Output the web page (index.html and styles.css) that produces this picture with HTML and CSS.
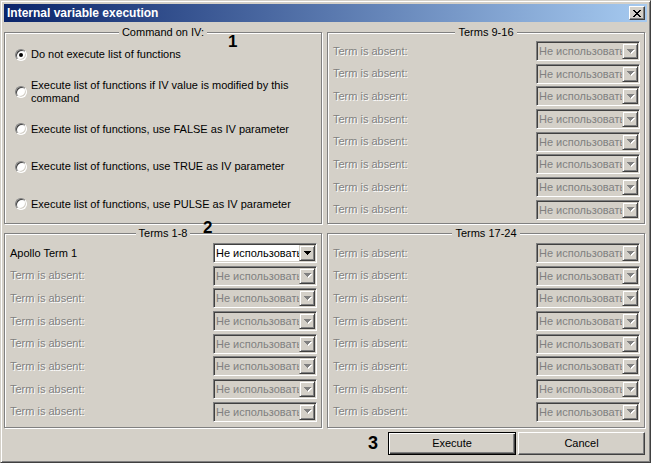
FILE: index.html
```html
<!DOCTYPE html>
<html lang="en">
<head>
<meta charset="utf-8">
<title>Internal variable execution</title>
<link rel="stylesheet" href="styles.css">
</head>
<body>
<div class="window">
  <div class="titlebar">
    <span class="title">Internal variable execution</span>
    <button class="close" type="button" aria-label="Close">
      <svg width="8" height="7" viewBox="0 0 8 7" shape-rendering="crispEdges"><path d="M0 0h2v1H0zM6 0h2v1H6zM1 1h2v1H1zM5 1h2v1H5zM2 2h4v1H2zM3 3h2v1H3zM2 4h4v1H2zM1 5h2v1H1zM5 5h2v1H5zM0 6h2v1H0zM6 6h2v1H6z" fill="#000"/></svg>
    </button>
  </div>

  <div class="panels">
    <section class="group">
      <div class="group-title">Command on IV:</div>
      <div class="options">
        <label class="radio-row"><span class="radio checked"></span><span class="radio-text">Do not execute list of functions</span></label>
        <label class="radio-row"><span class="radio"></span><span class="radio-text">Execute list of functions if IV value is modified by this command</span></label>
        <label class="radio-row"><span class="radio"></span><span class="radio-text">Execute list of functions, use FALSE as IV parameter</span></label>
        <label class="radio-row"><span class="radio"></span><span class="radio-text">Execute list of functions, use TRUE as IV parameter</span></label>
        <label class="radio-row"><span class="radio"></span><span class="radio-text">Execute list of functions, use PULSE as IV parameter</span></label>
      </div>
    </section>

    <section class="group">
      <div class="group-title">Terms 9-16</div>
      <div class="rows rows-top">
        <div class="row"><span class="label disabled">Term is absent:</span><div class="combo disabled"><span class="combo-text">Не использовать</span><span class="combo-btn"><svg width="8" height="5" viewBox="0 0 8 5" shape-rendering="crispEdges"><path d="M1 1h7v1H1zM2 2h5v1H2zM3 3h3v1H3zM4 4h1v1H4z" fill="#fff"/><path d="M0 0h7v1H0zM1 1h5v1H1zM2 2h3v1H2zM3 3h1v1H3z" fill="#808080"/></svg></span></div></div>
        <div class="row"><span class="label disabled">Term is absent:</span><div class="combo disabled"><span class="combo-text">Не использовать</span><span class="combo-btn"><svg width="8" height="5" viewBox="0 0 8 5" shape-rendering="crispEdges"><path d="M1 1h7v1H1zM2 2h5v1H2zM3 3h3v1H3zM4 4h1v1H4z" fill="#fff"/><path d="M0 0h7v1H0zM1 1h5v1H1zM2 2h3v1H2zM3 3h1v1H3z" fill="#808080"/></svg></span></div></div>
        <div class="row"><span class="label disabled">Term is absent:</span><div class="combo disabled"><span class="combo-text">Не использовать</span><span class="combo-btn"><svg width="8" height="5" viewBox="0 0 8 5" shape-rendering="crispEdges"><path d="M1 1h7v1H1zM2 2h5v1H2zM3 3h3v1H3zM4 4h1v1H4z" fill="#fff"/><path d="M0 0h7v1H0zM1 1h5v1H1zM2 2h3v1H2zM3 3h1v1H3z" fill="#808080"/></svg></span></div></div>
        <div class="row"><span class="label disabled">Term is absent:</span><div class="combo disabled"><span class="combo-text">Не использовать</span><span class="combo-btn"><svg width="8" height="5" viewBox="0 0 8 5" shape-rendering="crispEdges"><path d="M1 1h7v1H1zM2 2h5v1H2zM3 3h3v1H3zM4 4h1v1H4z" fill="#fff"/><path d="M0 0h7v1H0zM1 1h5v1H1zM2 2h3v1H2zM3 3h1v1H3z" fill="#808080"/></svg></span></div></div>
        <div class="row"><span class="label disabled">Term is absent:</span><div class="combo disabled"><span class="combo-text">Не использовать</span><span class="combo-btn"><svg width="8" height="5" viewBox="0 0 8 5" shape-rendering="crispEdges"><path d="M1 1h7v1H1zM2 2h5v1H2zM3 3h3v1H3zM4 4h1v1H4z" fill="#fff"/><path d="M0 0h7v1H0zM1 1h5v1H1zM2 2h3v1H2zM3 3h1v1H3z" fill="#808080"/></svg></span></div></div>
        <div class="row"><span class="label disabled">Term is absent:</span><div class="combo disabled"><span class="combo-text">Не использовать</span><span class="combo-btn"><svg width="8" height="5" viewBox="0 0 8 5" shape-rendering="crispEdges"><path d="M1 1h7v1H1zM2 2h5v1H2zM3 3h3v1H3zM4 4h1v1H4z" fill="#fff"/><path d="M0 0h7v1H0zM1 1h5v1H1zM2 2h3v1H2zM3 3h1v1H3z" fill="#808080"/></svg></span></div></div>
        <div class="row"><span class="label disabled">Term is absent:</span><div class="combo disabled"><span class="combo-text">Не использовать</span><span class="combo-btn"><svg width="8" height="5" viewBox="0 0 8 5" shape-rendering="crispEdges"><path d="M1 1h7v1H1zM2 2h5v1H2zM3 3h3v1H3zM4 4h1v1H4z" fill="#fff"/><path d="M0 0h7v1H0zM1 1h5v1H1zM2 2h3v1H2zM3 3h1v1H3z" fill="#808080"/></svg></span></div></div>
        <div class="row"><span class="label disabled">Term is absent:</span><div class="combo disabled"><span class="combo-text">Не использовать</span><span class="combo-btn"><svg width="8" height="5" viewBox="0 0 8 5" shape-rendering="crispEdges"><path d="M1 1h7v1H1zM2 2h5v1H2zM3 3h3v1H3zM4 4h1v1H4z" fill="#fff"/><path d="M0 0h7v1H0zM1 1h5v1H1zM2 2h3v1H2zM3 3h1v1H3z" fill="#808080"/></svg></span></div></div>
      </div>
    </section>

    <section class="group">
      <div class="group-title">Terms 1-8</div>
      <div class="rows">
        <div class="row"><span class="label">Apollo Term 1</span><div class="combo"><span class="combo-text">Не использовать</span><span class="combo-btn"><svg width="8" height="5" viewBox="0 0 8 5" shape-rendering="crispEdges"><path d="M0 0h7v1H0zM1 1h5v1H1zM2 2h3v1H2zM3 3h1v1H3z" fill="#000"/></svg></span></div></div>
        <div class="row"><span class="label disabled">Term is absent:</span><div class="combo disabled"><span class="combo-text">Не использовать</span><span class="combo-btn"><svg width="8" height="5" viewBox="0 0 8 5" shape-rendering="crispEdges"><path d="M1 1h7v1H1zM2 2h5v1H2zM3 3h3v1H3zM4 4h1v1H4z" fill="#fff"/><path d="M0 0h7v1H0zM1 1h5v1H1zM2 2h3v1H2zM3 3h1v1H3z" fill="#808080"/></svg></span></div></div>
        <div class="row"><span class="label disabled">Term is absent:</span><div class="combo disabled"><span class="combo-text">Не использовать</span><span class="combo-btn"><svg width="8" height="5" viewBox="0 0 8 5" shape-rendering="crispEdges"><path d="M1 1h7v1H1zM2 2h5v1H2zM3 3h3v1H3zM4 4h1v1H4z" fill="#fff"/><path d="M0 0h7v1H0zM1 1h5v1H1zM2 2h3v1H2zM3 3h1v1H3z" fill="#808080"/></svg></span></div></div>
        <div class="row"><span class="label disabled">Term is absent:</span><div class="combo disabled"><span class="combo-text">Не использовать</span><span class="combo-btn"><svg width="8" height="5" viewBox="0 0 8 5" shape-rendering="crispEdges"><path d="M1 1h7v1H1zM2 2h5v1H2zM3 3h3v1H3zM4 4h1v1H4z" fill="#fff"/><path d="M0 0h7v1H0zM1 1h5v1H1zM2 2h3v1H2zM3 3h1v1H3z" fill="#808080"/></svg></span></div></div>
        <div class="row"><span class="label disabled">Term is absent:</span><div class="combo disabled"><span class="combo-text">Не использовать</span><span class="combo-btn"><svg width="8" height="5" viewBox="0 0 8 5" shape-rendering="crispEdges"><path d="M1 1h7v1H1zM2 2h5v1H2zM3 3h3v1H3zM4 4h1v1H4z" fill="#fff"/><path d="M0 0h7v1H0zM1 1h5v1H1zM2 2h3v1H2zM3 3h1v1H3z" fill="#808080"/></svg></span></div></div>
        <div class="row"><span class="label disabled">Term is absent:</span><div class="combo disabled"><span class="combo-text">Не использовать</span><span class="combo-btn"><svg width="8" height="5" viewBox="0 0 8 5" shape-rendering="crispEdges"><path d="M1 1h7v1H1zM2 2h5v1H2zM3 3h3v1H3zM4 4h1v1H4z" fill="#fff"/><path d="M0 0h7v1H0zM1 1h5v1H1zM2 2h3v1H2zM3 3h1v1H3z" fill="#808080"/></svg></span></div></div>
        <div class="row"><span class="label disabled">Term is absent:</span><div class="combo disabled"><span class="combo-text">Не использовать</span><span class="combo-btn"><svg width="8" height="5" viewBox="0 0 8 5" shape-rendering="crispEdges"><path d="M1 1h7v1H1zM2 2h5v1H2zM3 3h3v1H3zM4 4h1v1H4z" fill="#fff"/><path d="M0 0h7v1H0zM1 1h5v1H1zM2 2h3v1H2zM3 3h1v1H3z" fill="#808080"/></svg></span></div></div>
        <div class="row"><span class="label disabled">Term is absent:</span><div class="combo disabled"><span class="combo-text">Не использовать</span><span class="combo-btn"><svg width="8" height="5" viewBox="0 0 8 5" shape-rendering="crispEdges"><path d="M1 1h7v1H1zM2 2h5v1H2zM3 3h3v1H3zM4 4h1v1H4z" fill="#fff"/><path d="M0 0h7v1H0zM1 1h5v1H1zM2 2h3v1H2zM3 3h1v1H3z" fill="#808080"/></svg></span></div></div>
      </div>
    </section>

    <section class="group">
      <div class="group-title">Terms 17-24</div>
      <div class="rows">
        <div class="row"><span class="label disabled">Term is absent:</span><div class="combo disabled"><span class="combo-text">Не использовать</span><span class="combo-btn"><svg width="8" height="5" viewBox="0 0 8 5" shape-rendering="crispEdges"><path d="M1 1h7v1H1zM2 2h5v1H2zM3 3h3v1H3zM4 4h1v1H4z" fill="#fff"/><path d="M0 0h7v1H0zM1 1h5v1H1zM2 2h3v1H2zM3 3h1v1H3z" fill="#808080"/></svg></span></div></div>
        <div class="row"><span class="label disabled">Term is absent:</span><div class="combo disabled"><span class="combo-text">Не использовать</span><span class="combo-btn"><svg width="8" height="5" viewBox="0 0 8 5" shape-rendering="crispEdges"><path d="M1 1h7v1H1zM2 2h5v1H2zM3 3h3v1H3zM4 4h1v1H4z" fill="#fff"/><path d="M0 0h7v1H0zM1 1h5v1H1zM2 2h3v1H2zM3 3h1v1H3z" fill="#808080"/></svg></span></div></div>
        <div class="row"><span class="label disabled">Term is absent:</span><div class="combo disabled"><span class="combo-text">Не использовать</span><span class="combo-btn"><svg width="8" height="5" viewBox="0 0 8 5" shape-rendering="crispEdges"><path d="M1 1h7v1H1zM2 2h5v1H2zM3 3h3v1H3zM4 4h1v1H4z" fill="#fff"/><path d="M0 0h7v1H0zM1 1h5v1H1zM2 2h3v1H2zM3 3h1v1H3z" fill="#808080"/></svg></span></div></div>
        <div class="row"><span class="label disabled">Term is absent:</span><div class="combo disabled"><span class="combo-text">Не использовать</span><span class="combo-btn"><svg width="8" height="5" viewBox="0 0 8 5" shape-rendering="crispEdges"><path d="M1 1h7v1H1zM2 2h5v1H2zM3 3h3v1H3zM4 4h1v1H4z" fill="#fff"/><path d="M0 0h7v1H0zM1 1h5v1H1zM2 2h3v1H2zM3 3h1v1H3z" fill="#808080"/></svg></span></div></div>
        <div class="row"><span class="label disabled">Term is absent:</span><div class="combo disabled"><span class="combo-text">Не использовать</span><span class="combo-btn"><svg width="8" height="5" viewBox="0 0 8 5" shape-rendering="crispEdges"><path d="M1 1h7v1H1zM2 2h5v1H2zM3 3h3v1H3zM4 4h1v1H4z" fill="#fff"/><path d="M0 0h7v1H0zM1 1h5v1H1zM2 2h3v1H2zM3 3h1v1H3z" fill="#808080"/></svg></span></div></div>
        <div class="row"><span class="label disabled">Term is absent:</span><div class="combo disabled"><span class="combo-text">Не использовать</span><span class="combo-btn"><svg width="8" height="5" viewBox="0 0 8 5" shape-rendering="crispEdges"><path d="M1 1h7v1H1zM2 2h5v1H2zM3 3h3v1H3zM4 4h1v1H4z" fill="#fff"/><path d="M0 0h7v1H0zM1 1h5v1H1zM2 2h3v1H2zM3 3h1v1H3z" fill="#808080"/></svg></span></div></div>
        <div class="row"><span class="label disabled">Term is absent:</span><div class="combo disabled"><span class="combo-text">Не использовать</span><span class="combo-btn"><svg width="8" height="5" viewBox="0 0 8 5" shape-rendering="crispEdges"><path d="M1 1h7v1H1zM2 2h5v1H2zM3 3h3v1H3zM4 4h1v1H4z" fill="#fff"/><path d="M0 0h7v1H0zM1 1h5v1H1zM2 2h3v1H2zM3 3h1v1H3z" fill="#808080"/></svg></span></div></div>
        <div class="row"><span class="label disabled">Term is absent:</span><div class="combo disabled"><span class="combo-text">Не использовать</span><span class="combo-btn"><svg width="8" height="5" viewBox="0 0 8 5" shape-rendering="crispEdges"><path d="M1 1h7v1H1zM2 2h5v1H2zM3 3h3v1H3zM4 4h1v1H4z" fill="#fff"/><path d="M0 0h7v1H0zM1 1h5v1H1zM2 2h3v1H2zM3 3h1v1H3z" fill="#808080"/></svg></span></div></div>
      </div>
    </section>
  </div>

  <div class="actions">
    <span class="mark mark-3">3</span>
    <button class="btn btn-default" type="button">Execute</button>
    <button class="btn" type="button">Cancel</button>
  </div>

  <span class="mark mark-1">1</span>
  <span class="mark mark-2">2</span>
</div>
</body>
</html>
```

FILE: styles.css
```css
* { box-sizing: border-box; }

body {
  margin: 0;
  background: #d4d0c8;
  font-family: "Liberation Sans", Arial, sans-serif;
  font-size: 11px;
  line-height: 13px;
  color: #000;
}

.window {
  position: relative;
  width: 651px;
  height: 463px;
  border: 1px solid;
  border-color: #d4d0c8 #404040 #404040 #d4d0c8;
  box-shadow: inset 1px 1px 0 #fff, inset -1px -1px 0 #808080;
  padding: 3px;
  display: flex;
  flex-direction: column;
  background: #d4d0c8;
}

.titlebar {
  height: 18px;
  flex: none;
  background: linear-gradient(to right, #0a246a, #a6caf0);
  display: flex;
  align-items: center;
  justify-content: space-between;
  padding: 0 2px 0 3px;
}

.title {
  color: #fff;
  font-weight: bold;
  font-size: 12px;
  line-height: 18px;
}

.close {
  width: 16px;
  height: 14px;
  padding: 0;
  margin: 0;
  background: #d4d0c8;
  border: 1px solid;
  border-color: #fff #404040 #404040 #fff;
  box-shadow: inset -1px -1px 0 #808080;
  display: flex;
  align-items: center;
  justify-content: center;
}

.panels {
  display: grid;
  grid-template-columns: 318px 318px;
  grid-template-rows: 192px 195px;
  column-gap: 5px;
  row-gap: 9px;
  margin-top: 10px;
}

.group {
  border: 1px solid #808080;
  box-shadow: 1px 1px 0 #fff, inset 1px 1px 0 #fff;
  display: flex;
  flex-direction: column;
  min-height: 0;
}

.group-title {
  align-self: center;
  margin: -7px 0 -6px;
  padding: 0 3px;
  background: #d4d0c8;
  line-height: 13px;
}

.options {
  flex: 1;
  display: grid;
  grid-template-rows: repeat(5, 1fr);
  padding: 3px 0 0 10px;
}

.radio-row {
  display: flex;
  align-items: center;
  gap: 4px;
}

.radio {
  flex: none;
  width: 12px;
  height: 12px;
  border-radius: 50%;
  background: #fff;
  border: 1px solid;
  border-color: #808080 #fff #fff #808080;
  box-shadow: inset 1px 1px 0 #404040, inset -1px -1px 0 #d4d0c8;
  display: flex;
  align-items: center;
  justify-content: center;
}

.radio.checked::after {
  content: "";
  width: 4px;
  height: 4px;
  border-radius: 50%;
  background: #000;
}

.radio-text {
  max-width: 265px;
}

.rows {
  display: flex;
  flex-direction: column;
  gap: 2.7px;
  padding: 9px 4px 0 5px;
}

.rows-top {
  padding-top: 8px;
}

.row {
  height: 20px;
  display: flex;
  align-items: center;
  justify-content: space-between;
}

.label.disabled {
  color: #808080;
  text-shadow: 1px 1px 0 #fff;
}

.combo {
  width: 104px;
  height: 20px;
  display: flex;
  padding: 1px;
  background: #fff;
  border: 1px solid;
  border-color: #808080 #fff #fff #808080;
  box-shadow: inset 1px 1px 0 #404040, inset -1px -1px 0 #d4d0c8;
}

.combo.disabled {
  background: #d4d0c8;
  color: #808080;
}

.combo-text {
  flex: 1;
  min-width: 0;
  overflow: hidden;
  white-space: nowrap;
  padding-left: 1px;
  line-height: 16px;
}

.combo-btn {
  flex: none;
  width: 16px;
  height: 16px;
  background: #d4d0c8;
  border: 1px solid;
  border-color: #d4d0c8 #404040 #404040 #d4d0c8;
  box-shadow: inset 1px 1px 0 #fff, inset -1px -1px 0 #808080;
  display: flex;
  align-items: center;
  justify-content: center;
}

.combo-btn svg { display: block; margin-left: 1px; }

.actions {
  display: flex;
  justify-content: flex-end;
  align-items: center;
  gap: 2px;
  margin-top: 4px;
  width: 641px;
}

.btn {
  width: 127px;
  height: 23px;
  padding: 0;
  margin: 0;
  font: inherit;
  color: #000;
  background: #d4d0c8;
  border: 1px solid;
  border-color: #fff #404040 #404040 #fff;
  box-shadow: inset -1px -1px 0 #808080;
}

.btn-default {
  width: 128px;
  border-color: #000;
  box-shadow: inset 1px 1px 0 #fff, inset -1px -1px 0 #404040, inset -2px -2px 0 #808080;
}

.mark {
  font-weight: bold;
  font-size: 17px;
  line-height: 17px;
  color: #000;
}

.mark-3 {
  font-size: 18px;
  margin-right: 8px;
}

.mark-1 {
  position: absolute;
  left: 227px;
  top: 32px;
}

.mark-2 {
  position: absolute;
  left: 202px;
  top: 218px;
}
```
